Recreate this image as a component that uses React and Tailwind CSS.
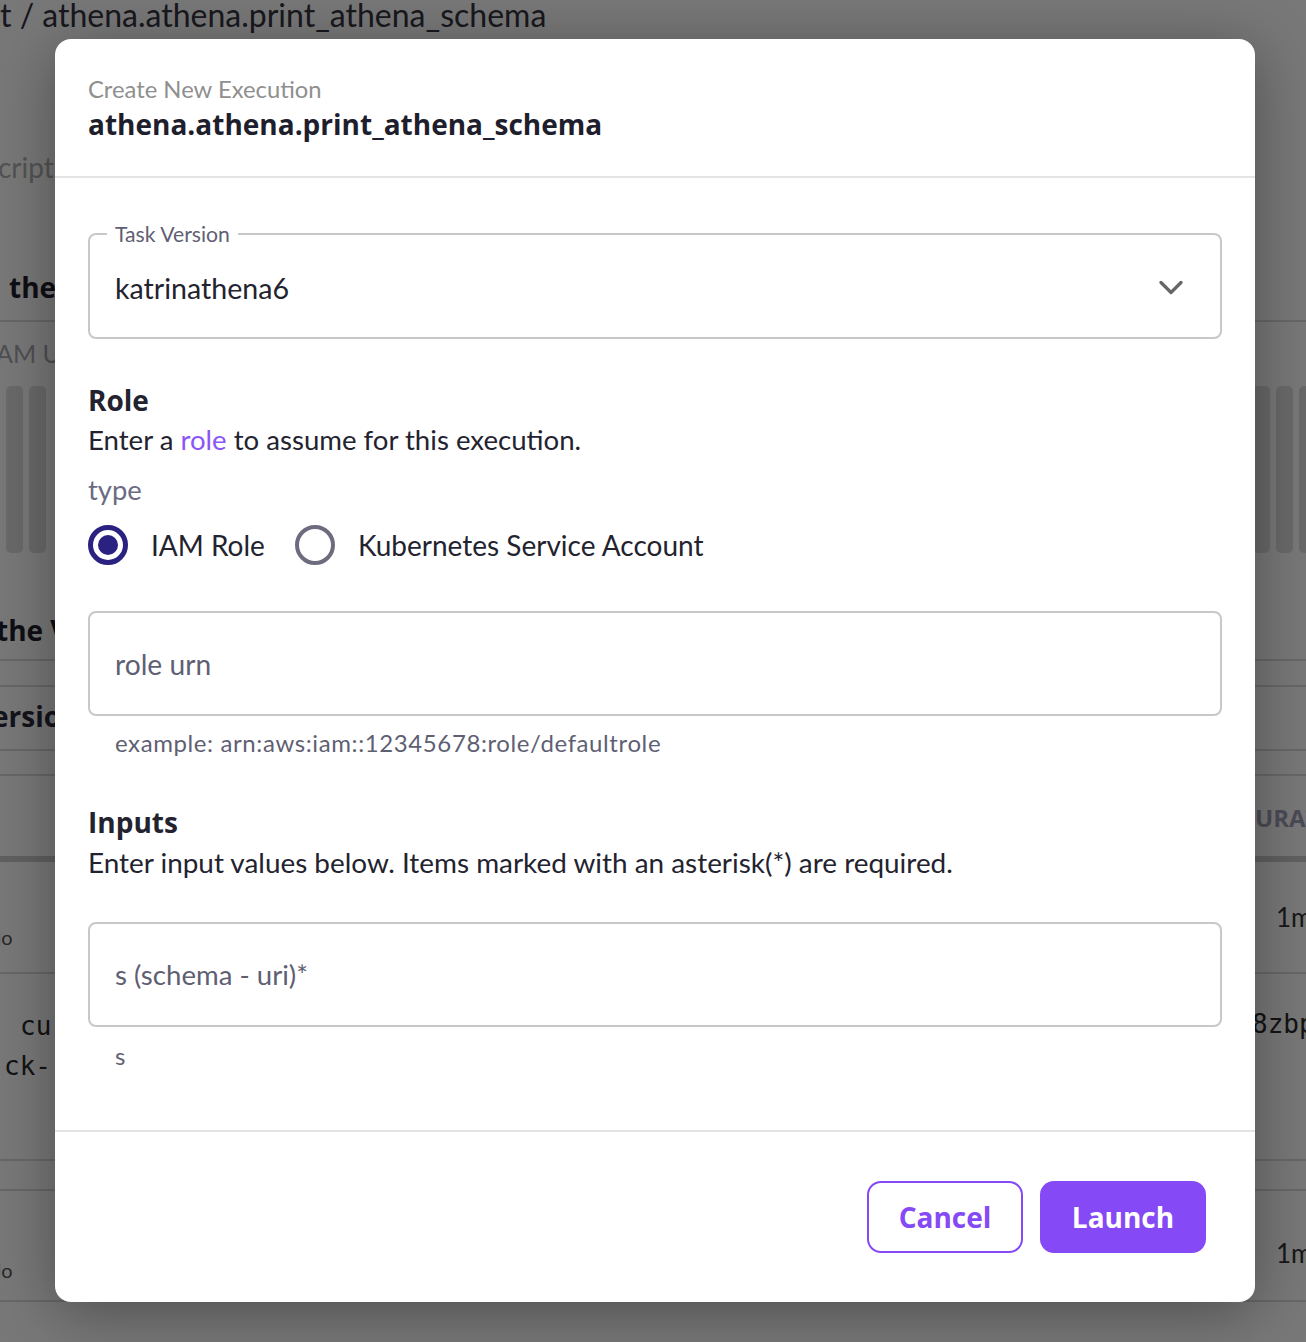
import React from "react";

function Radio({ selected }) {
  return selected ? (
    <div className="w-[40px] h-[40px] rounded-full border-[5px] border-[#2a2180] flex items-center justify-center shrink-0">
      <div className="w-[20px] h-[20px] rounded-full bg-[#2a2180]" />
    </div>
  ) : (
    <div className="w-[40px] h-[40px] rounded-full border-[4px] border-[#6c6c7e] shrink-0" />
  );
}

function Row({ h, left, right, line, thick, leftClass = "", rightClass = "" }) {
  return (
    <div
      className={
        "flex w-full items-center " +
        (thick ? "border-b-[6px] border-[#cdcdcd] " : line ? "border-b-2 border-[#dadada] " : "")
      }
      style={{ height: h }}
    >
      <div className={"w-[55px] shrink-0 whitespace-nowrap " + leftClass}>{left}</div>
      <div className="w-[1200px] shrink-0" />
      <div className={"flex-1 whitespace-nowrap " + rightClass}>{right}</div>
    </div>
  );
}

function Bars() {
  return (
    <div className="flex gap-[6px] h-[167px] shrink-0">
      <div className="w-[17px] h-full rounded-[5px] bg-[#e0e0e0]" />
      <div className="w-[17px] h-full rounded-[5px] bg-[#e0e0e0]" />
      <div className="w-[17px] h-full rounded-[5px] bg-[#e0e0e0]" />
    </div>
  );
}

const bold = "font-['Open_Sans',sans-serif] font-bold";

function Background() {
  return (
    <div className="w-[1306px] h-[1342px] bg-white overflow-hidden font-['Lato',sans-serif]">
      <div className="h-[40px] flex items-start">
        <div className="text-[32px] leading-[30px] text-[#333340] whitespace-nowrap">
          t / athena.athena.print_athena_schema
        </div>
      </div>
      <div className="h-[110px]" />
      <Row h={34} left={<span className="text-[28px] text-[#b0b0b0] -ml-[2px]">cript</span>} />
      <Row
        h={138}
        line
        left={<span className={"text-[28px] text-[#1e1e2c] ml-[9px] relative top-[2px] " + bold}>the</span>}
        leftClass="self-end pb-[14px]"
      />
      <Row
        h={64}
        left={<span className="text-[25px] text-[#a8a8b0] -ml-[4px]">AM UTC</span>}
      />
      <div className="flex w-full h-[167px]">
        <div className="w-[55px] shrink-0 overflow-hidden flex">
          <div className="-ml-[17px] flex">
            <Bars />
          </div>
        </div>
        <div className="w-[1200px] shrink-0" />
        <div className="flex-1 flex">
          <div className="-ml-[2px] flex">
            <Bars />
          </div>
        </div>
      </div>
      <Row h={60} />
      <Row
        h={48}
        line
        left={<span className={"text-[28px] text-[#1e1e2c] -ml-[4px] relative top-[-6px] " + bold}>the Versions</span>}
      />
      <Row h={26} line />
      <Row
        h={64}
        line
        left={<span className={"text-[28px] text-[#2a2a3a] -ml-[8px] relative top-[-2px] " + bold}>ersions</span>}
      />
      <Row h={25} line />
      <Row
        h={86}
        thick
        right={<span className={"text-[24px] text-[#a0a0b6] relative top-[2px] " + bold}>URATION</span>}
      />
      <Row
        h={112}
        line
        left={<span className="text-[20px] text-[#555] -ml-[10px] relative top-[20px]">do</span>}
        right={<span className="text-[26px] text-[#333] ml-[21px] relative top-[0px]">1m</span>}
      />
      <div className="flex w-full h-[187px] border-b-2 border-[#dadada]">
        <div className="w-[55px] shrink-0 overflow-hidden font-['DejaVu_Sans_Mono',monospace] text-[26px] leading-[40px] text-[#2a2a2a] whitespace-nowrap pt-[32px]">
          <div className="ml-[20px]">cu</div>
          <div className="ml-[4px]">ck-</div>
        </div>
        <div className="w-[1197px] shrink-0" />
        <div className="flex-1 font-['DejaVu_Sans_Mono',monospace] text-[26px] leading-[40px] text-[#2a2a2a] whitespace-nowrap pt-[30px]">
          8zbp
        </div>
      </div>
      <Row h={30} line />
      <Row
        h={111}
        line
        left={<span className="text-[20px] text-[#555] -ml-[10px] relative top-[24px]">do</span>}
        right={<span className="text-[26px] text-[#333] ml-[21px] relative top-[8px]">1m</span>}
      />
    </div>
  );
}

export default function App() {
  return (
    <div className="relative w-[1306px] h-[1342px] overflow-hidden">
      <Background />
      <div className="absolute inset-0 bg-black/[0.53]">
        <div className="ml-[55px] mt-[39px] w-[1200px] bg-white rounded-[16px] shadow-[0_10px_60px_rgba(0,0,0,0.35)] font-['Lato',sans-serif]">
          {/* header */}
          <div className="px-[33px] pt-[36px] pb-[32px] border-b-2 border-[#e4e4e4]">
            <div className="text-[23.8px] leading-[28px] text-[#8f8f8f]">Create New Execution</div>
            <div className={"mt-[1px] text-[28px] leading-[40px] text-[#1e1e2d] " + bold}>
              athena.athena.print_athena_schema
            </div>
          </div>
          {/* body */}
          <div className="px-[33px] pb-[60px]">
            <fieldset className="mt-[44px] border-2 border-[#c8c8c8] rounded-[8px]">
              <legend className="ml-[17px] px-[8px] text-[21.2px] leading-[24px] text-[#5f5f74]">
                Task Version
              </legend>
              <div className="flex items-center justify-between pl-[25px] pr-[37px] pt-[24px] pb-[31px]">
                <span className="text-[28.6px] leading-[36px] text-[#23232f]">katrinathena6</span>
                <svg width="24" height="15" viewBox="0 0 24 15" fill="none" className="relative top-[-1px]">
                  <path d="M2 2.5 L12 12.5 L22 2.5" stroke="#666666" strokeWidth="3.2" strokeLinecap="round" strokeLinejoin="round" />
                </svg>
              </div>
            </fieldset>

            <div className={"mt-[43px] text-[28px] leading-[36px] text-[#23232f] " + bold}>Role</div>
            <div className="mt-[4px] text-[27.6px] leading-[36px] text-[#23232f]">
              Enter a <span className="text-[#8b55f7]">role</span> to assume for this execution.
            </div>
            <div className="mt-[14px] text-[27.4px] leading-[36px] text-[#6b6b83]">type</div>
            <div className="mt-[13px] h-[48px] flex items-center">
              <Radio selected />
              <span className="ml-[23px] text-[28px] leading-[36px] text-[#23232f]">IAM Role</span>
              <div className="ml-[30px]">
                <Radio />
              </div>
              <span className="ml-[23px] text-[28px] leading-[36px] text-[#23232f]">
                Kubernetes Service Account
              </span>
            </div>

            <div className="mt-[42px] h-[105px] border-2 border-[#c8c8c8] rounded-[8px] flex items-center pl-[25px]">
              <span className="text-[28.2px] leading-[36px] text-[#5f5f74]">role urn</span>
            </div>
            <div className="mt-[13px] pl-[27px] text-[24px] leading-[28px] tracking-[0.6px] text-[#5f5f74]">
              example: arn:aws:iam::12345678:role/defaultrole
            </div>

            <div className={"mt-[47px] text-[28px] leading-[36px] text-[#23232f] " + bold}>Inputs</div>
            <div className="mt-[4px] text-[27.9px] leading-[36px] text-[#23232f]">
              Enter input values below. Items marked with an asterisk(*) are required.
            </div>

            <div className="mt-[42px] h-[105px] border-2 border-[#c8c8c8] rounded-[8px] flex items-center pl-[25px]">
              <span className="text-[27.6px] leading-[36px] text-[#5f5f74]">s (schema - uri)*</span>
            </div>
            <div className="mt-[15px] pl-[27px] text-[24px] leading-[28px] text-[#5f5f74]">s</div>
          </div>
          {/* footer */}
          <div className="border-t-2 border-[#e4e4e4] flex justify-end gap-[17px] pt-[49px] pb-[49px] pr-[49px]">
            <button className={"w-[156px] h-[72px] rounded-[14px] border-2 border-[#8549f6] text-[#8549f6] text-[28px] " + bold}>
              Cancel
            </button>
            <button className={"w-[166px] h-[72px] rounded-[14px] bg-[#8549f6] text-white text-[28px] " + bold}>
              Launch
            </button>
          </div>
        </div>
      </div>
    </div>
  );
}
